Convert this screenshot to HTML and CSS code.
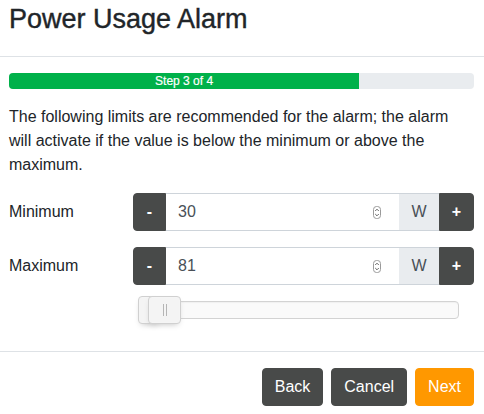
FILE: index.html
```html
<!DOCTYPE html>
<html>
<head>
<meta charset="utf-8">
<link rel="stylesheet" href="styles.css">
</head>
<body>
<div class="modal">
  <div class="modal-header">
    <h1 class="title">Power Usage Alarm</h1>
  </div>
  <div class="modal-body">
    <div class="progress">
      <div class="progress-bar" style="width: 75.3%">Step 3 of 4</div>
    </div>
    <p class="intro">The following limits are recommended for the alarm; the alarm will activate if the value is below the minimum or above the maximum.</p>
    <div class="form-grid">
      <label class="field-label">Minimum</label>
      <div class="input-group">
        <button class="btn btn-dark btn-minus">-</button>
        <div class="input">
          <span class="value">30</span>
          <svg class="spinner" width="8" height="13" viewBox="0 0 8 13"><rect x="0.5" y="0.5" width="7" height="12" rx="3" fill="#fff" stroke="#9a9a9a"/><path d="M2.2 5 L4 3.2 L5.8 5 M2.2 8 L4 9.8 L5.8 8" fill="none" stroke="#555" stroke-width="0.9"/></svg>
        </div>
        <span class="addon">W</span>
        <button class="btn btn-dark btn-plus">+</button>
      </div>
      <label class="field-label">Maximum</label>
      <div class="input-group">
        <button class="btn btn-dark btn-minus">-</button>
        <div class="input">
          <span class="value">81</span>
          <svg class="spinner" width="8" height="13" viewBox="0 0 8 13"><rect x="0.5" y="0.5" width="7" height="12" rx="3" fill="#fff" stroke="#9a9a9a"/><path d="M2.2 5 L4 3.2 L5.8 5 M2.2 8 L4 9.8 L5.8 8" fill="none" stroke="#555" stroke-width="0.9"/></svg>
        </div>
        <span class="addon">W</span>
        <button class="btn btn-dark btn-plus">+</button>
      </div>
      <div></div>
      <div class="slider">
        <div class="slider-track"></div>
        <div class="slider-handle slider-handle-lower"></div>
        <div class="slider-handle slider-handle-upper"><span class="grip"></span></div>
      </div>
    </div>
  </div>
  <div class="modal-footer">
    <button class="btn btn-dark btn-lg">Back</button>
    <button class="btn btn-dark btn-lg">Cancel</button>
    <button class="btn btn-orange btn-lg">Next</button>
  </div>
</div>
</body>
</html>
```
FILE: styles.css
```css
* { box-sizing: border-box; }
html, body {
  margin: 0;
  padding: 0;
  background: #fff;
  font-family: "Liberation Sans", Arial, Helvetica, sans-serif;
  color: #212529;
}
.modal { width: 484px; }
.modal-header {
  padding: 0 10px 18px 9px;
  border-bottom: 1px solid #dee2e6;
}
.title {
  margin: 0;
  font-size: 27px;
  line-height: 38px;
  font-weight: 400;
  color: #212529;
  -webkit-text-stroke: 0.4px #212529;
}
.modal-body {
  padding: 16px 10px 27px 9px;
}
.progress {
  height: 16px;
  background: #e9ecef;
  border-radius: 4px;
  overflow: hidden;
  display: flex;
}
.progress-bar {
  background: #00b14a;
  color: #fff;
  font-size: 12px;
  line-height: 16px;
  text-align: center;
  -webkit-text-stroke: 0.2px #fff;
}
.intro {
  margin: 16px 0;
  font-size: 16px;
  line-height: 24px;
}
.form-grid {
  display: grid;
  grid-template-columns: 124px 1fr;
  row-gap: 16px;
}
.field-label {
  font-size: 16px;
  display: flex;
  align-items: center;
}
.input-group {
  display: flex;
  height: 38px;
}
.btn {
  font-family: inherit;
  font-size: 16px;
  border: 1px solid transparent;
  border-radius: 4px;
  padding: 0 12px;
  cursor: pointer;
}
.btn-dark {
  background: #484a49;
  color: #fff;
  border-color: #484a49;
}
.btn-minus {
  width: 33px;
  border-radius: 4px 0 0 4px;
  padding: 0;
  font-weight: 700;
}
.btn-plus {
  width: 35px;
  border-radius: 0 4px 4px 0;
  padding: 0;
  font-weight: 700;
}
.input {
  flex: 1;
  display: flex;
  align-items: center;
  justify-content: space-between;
  border-top: 1px solid #ced4da;
  border-bottom: 1px solid #ced4da;
  padding: 0 18px 0 12px;
  font-size: 16px;
  color: #495057;
}
.addon {
  width: 40px;
  display: flex;
  align-items: center;
  justify-content: center;
  background: #e9ecef;
  border-top: 1px solid #ced4da;
  border-bottom: 1px solid #ced4da;
  font-size: 16px;
  color: #495057;
}
.slider {
  grid-column: 2;
  position: relative;
  height: 28px;
  margin: -5px 15px 0 5px;
}
.slider-track {
  position: absolute;
  left: 0;
  right: 0;
  top: 5px;
  height: 18px;
  background: #fafafa;
  border: 1px solid #d3d3d3;
  border-radius: 4px;
  box-shadow: inset 0 1px 1px #f0f0f0;
}
.slider-handle {
  position: absolute;
  top: 0;
  height: 28px;
  background: #f4f4f4;
  border: 1px solid #d0d0d0;
  border-radius: 4px;
  box-shadow: inset 0 0 1px #fff, 0 3px 6px -3px #bbb;
}
.slider-handle-lower {
  left: 0;
  width: 22px;
}
.slider-handle-upper {
  left: 10px;
  width: 33px;
}
.grip {
  position: absolute;
  left: 14px;
  top: 7px;
  width: 4px;
  height: 12px;
  border-left: 1px solid #b5b5b5;
  border-right: 1px solid #b5b5b5;
}
.modal-footer {
  border-top: 1px solid #dee2e6;
  padding: 16px 10px 8px 9px;
  display: flex;
  justify-content: flex-end;
  gap: 8px;
}
.btn-lg {
  height: 38px;
  padding: 0 12px;
}
.btn-orange {
  background: #ff9800;
  border-color: #ff9800;
  color: #fff;
}
```
